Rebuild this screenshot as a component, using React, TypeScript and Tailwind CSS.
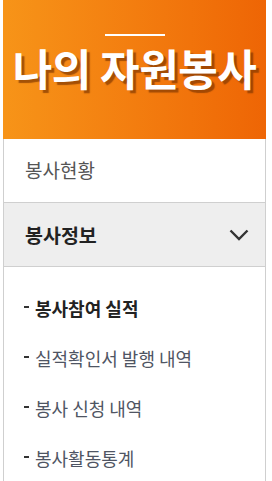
import React from "react";

const font = { fontFamily: '"Noto Sans CJK KR", "Noto Sans", sans-serif' };

export default function App() {
  const subs = [
    { t: "봉사참여 실적", active: true },
    { t: "실적확인서 발행 내역" },
    { t: "봉사 신청 내역" },
    { t: "봉사활동통계" },
  ];
  return (
    <div className="w-[272px] h-[481px] bg-white overflow-hidden" style={font}>
      <div className="ml-[3px] w-[263px]">
        <div className="h-[139px] bg-gradient-to-r from-[#f79418] to-[#ee6505] flex flex-col items-center">
          <div className="mt-[34px] w-[60px] h-[2px] bg-white" />
          <div className="mt-[4px] text-[43px] leading-[54px] font-bold text-white tracking-[-0.5px] [text-shadow:3px_3px_1px_rgba(130,55,0,0.7)]">
            나의 자원봉사
          </div>
        </div>
        <div className="border-x border-[#cfcfcf]">
          <div className="h-[64px] border-b border-[#cfcfcf] flex items-center pl-[21px] text-[19px] text-[#555]">
            봉사현황
          </div>
          <div className="h-[64px] border-b border-[#cfcfcf] bg-[#eeeeee] flex items-center justify-between pl-[21px] pr-[16px] text-[19.5px] font-bold text-[#222]">
            <span>봉사정보</span>
            <svg width="20" height="12" viewBox="0 0 20 12" fill="none">
              <path d="M1.5 1.5 L10 10 L18.5 1.5" stroke="#333" strokeWidth="2.4" />
            </svg>
          </div>
          <div className="pt-[16px] h-[214px]">
            {subs.map((s) => (
              <div
                key={s.t}
                className={`h-[50px] flex items-center pl-[20px] text-[18px] ${s.active ? "font-bold text-[#222]" : "text-[#4f5563]"}`}
              >
                <span className="w-[5px] h-[2px] bg-[#333] mr-[6px] mt-[-2px]" />
                {s.t}
              </div>
            ))}
          </div>
        </div>
      </div>
    </div>
  );
}
